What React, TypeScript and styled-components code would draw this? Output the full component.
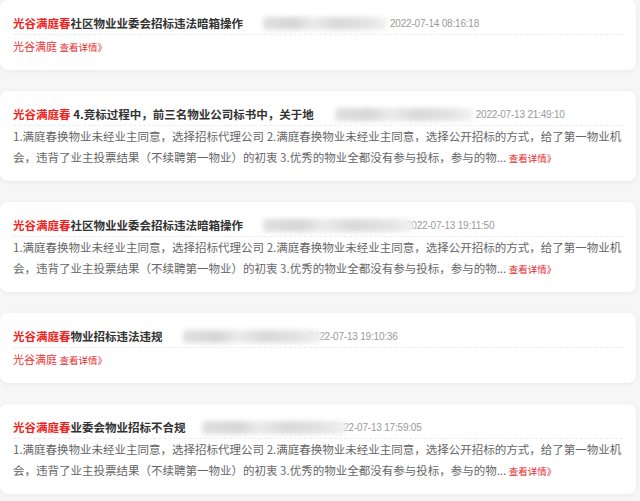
import React from 'react';
import styled, { createGlobalStyle } from 'styled-components';

const GlobalStyle = createGlobalStyle`
	html, body {
		margin: 0;
		padding: 0;
		background: #f6f6f6;
	}
	body {
		font-family: 'Noto Sans CJK SC', 'Noto Sans', sans-serif;
	}
`;

type Post = {
	title: string;
	spaced?: boolean;
	date: string;
	blurGap: number;
	blurWidth: number;
	blurOverlap: number;
	summary?: string;
};

const SUMMARY =
	'1.满庭春换物业未经业主同意，选择招标代理公司 2.满庭春换物业未经业主同意，选择公开招标的方式，给了第一物业机会，违背了业主投票结果（不续聘第一物业）的初衷 3.优秀的物业全都没有参与投标，参与的物...';

const posts: Post[] = [
	{ title: '社区物业业委会招标违法暗箱操作', date: '2022-07-14 08:16:18', blurGap: 20, blurWidth: 124, blurOverlap: 0 },
	{
		title: '4.竞标过程中，前三名物业公司标书中，关于地',
		spaced: true,
		date: '2022-07-13 21:49:10',
		blurGap: 21,
		blurWidth: 138,
		blurOverlap: 0,
		summary: SUMMARY,
	},
	{ title: '社区物业业委会招标违法暗箱操作', date: '2022-07-13 19:11:50', blurGap: 20, blurWidth: 150, blurOverlap: 10, summary: SUMMARY },
	{ title: '物业招标违法违规', date: '2022-07-13 19:10:36', blurGap: 20, blurWidth: 138, blurOverlap: 15 },
	{ title: '业委会物业招标不合规', date: '2022-07-13 17:59:05', blurGap: 16, blurWidth: 144, blurOverlap: 16, summary: SUMMARY },
];

const PostCard: React.FC<{ post: Post }> = ({ post }) => (
	<Card>
		<HeadRow>
			<Title>
				<Brand>光谷满庭春</Brand>
				{post.spaced ? ' ' : ''}
				{post.title}
			</Title>
			<Redacted $gap={post.blurGap} $width={post.blurWidth} $overlap={post.blurOverlap} />
			<Time>{post.date}</Time>
		</HeadRow>
		{post.summary ? (
			<Summary>
				{post.summary} <More>查看详情》</More>
			</Summary>
		) : (
			<Source>
				光谷满庭 <More>查看详情》</More>
			</Source>
		)}
	</Card>
);

const App: React.FC = () => (
	<Page>
		<GlobalStyle />
		{posts.map((p, i) => (
			<PostCard key={i} post={p} />
		))}
	</Page>
);

const Page = styled.div`
	display: flex;
	flex-direction: column;
	gap: 21px;
	width: 636px;
	padding-bottom: 8px;
`;

const Card = styled.div`
	background: #fff;
	border-radius: 8px;
	box-shadow: 0 1px 5px rgba(0, 0, 0, 0.06);
	padding: 12px 13px 13px 13px;
`;

const HeadRow = styled.div`
	display: flex;
	align-items: center;
	height: 22px;
	border-bottom: 1px dashed #ececec;
	white-space: nowrap;
	overflow: hidden;
`;

const Title = styled.span`
	font-size: 11.5px;
	font-weight: 700;
	color: #333;
`;

const Brand = styled.span`
	color: #ee2320;
`;

const Redacted = styled.span<{ $gap: number; $width: number; $overlap: number }>`
	position: relative;
	z-index: 1;
	flex: none;
	margin-left: ${(p) => p.$gap}px;
	margin-right: ${(p) => 3 - p.$overlap}px;
	width: ${(p) => p.$width}px;
	height: 13px;
	border-radius: 3px;
	background: linear-gradient(90deg, #e0e0e0 0%, #d6d6d6 25%, #ebebeb 40%, #d9d9d9 60%, #e4e4e4 85%, #f3f3f3 100%);
	filter: blur(2.5px);
`;

const Time = styled.span`
	font-family: 'Liberation Sans', Arial, sans-serif;
	font-size: 10px;
	letter-spacing: -0.2px;
	color: #9a9a9a;
`;

const Summary = styled.div`
	font-size: 11.5px;
	line-height: 21px;
	color: #666;
	word-break: break-all;
`;

const Source = styled.div`
	font-size: 11px;
	line-height: 22px;
	color: #ee3333;
`;

const More = styled.span`
	display: inline-block;
	font-size: 9.5px;
	line-height: 12px;
	color: #e4262b;
`;

export default App;
